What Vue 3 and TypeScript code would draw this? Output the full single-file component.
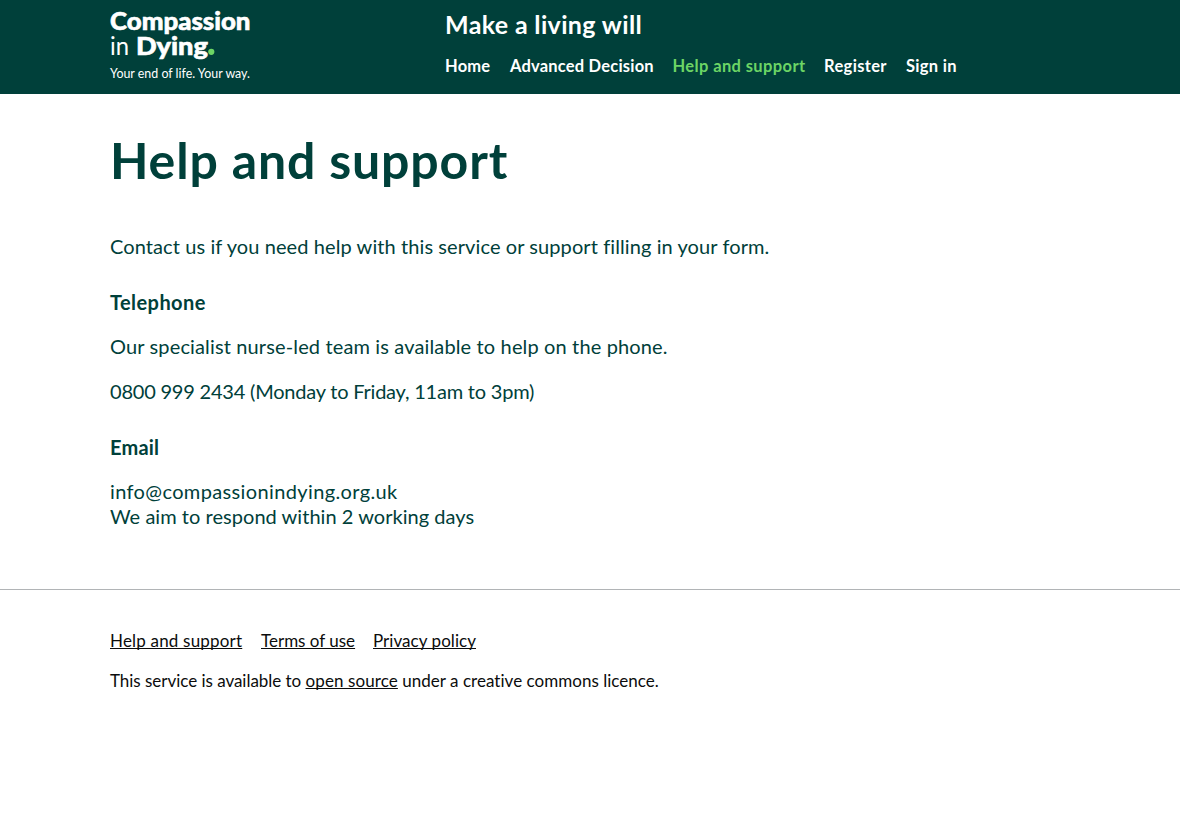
<script setup lang="ts">
interface Link {
  label: string
  kind: string
}

const navigation: Link[] = [
  { label: 'Home', kind: 'home' },
  { label: 'Advanced Decision', kind: 'decision' },
  { label: 'Help and support', kind: 'help active' },
  { label: 'Register', kind: 'register' },
  { label: 'Sign in', kind: 'sign-in' },
]

const footerLinks: Link[] = [
  { label: 'Help and support', kind: 'help' },
  { label: 'Terms of use', kind: 'terms' },
  { label: 'Privacy policy', kind: 'privacy' },
]
</script>

<template>
  <div class="page">
    <header class="header">
      <div class="container header-row">
        <a class="logo" aria-label="Compassion in Dying">
          <svg width="142" height="76" viewBox="0 0 142 76">
            <g fill="#fff">
              <text x="0" y="21.5" class="heavy" textLength="140.5" lengthAdjust="spacingAndGlyphs">Compassion</text>
              <text x="0" y="46.5" class="light" textLength="19" lengthAdjust="spacingAndGlyphs">in</text>
              <text x="26" y="46.5" class="heavy" textLength="72" lengthAdjust="spacingAndGlyphs">Dying</text>
              <text x="0" y="69.5" class="tagline" textLength="140" lengthAdjust="spacingAndGlyphs">Your end of life. Your way.</text>
            </g>
            <circle cx="101.3" cy="43.8" r="3.1" fill="#6cd565" />
          </svg>
        </a>
        <div class="service">
          <div class="service-name"><span>Make a living will</span></div>
          <nav class="nav">
            <a v-for="link in navigation" :key="link.label" :class="link.kind">{{ link.label }}</a>
          </nav>
        </div>
      </div>
    </header>

    <main class="container main">
      <h1>Help and support</h1>
      <p class="intro">Contact us if you need help with this service or support filling in your form.</p>
      <h2 class="telephone">Telephone</h2>
      <p class="team">Our specialist nurse-led team is available to help on the phone.</p>
      <p class="hours">0800 999 2434 (Monday to Friday, 11am to 3pm)</p>
      <h2 class="email">Email</h2>
      <p><span class="address">info@compassionindying.org.uk</span><br /><span class="response">We aim to respond within 2 working days</span></p>
    </main>

    <footer class="footer">
      <div class="container">
        <div class="footer-links">
          <a v-for="link in footerLinks" :key="link.label" :class="link.kind">{{ link.label }}</a>
        </div>
        <p class="licence"><span class="before">This service is available to </span><a class="source">open source</a><span class="after"> under a creative commons licence.</span></p>
      </div>
    </footer>
  </div>
</template>

<style>
body {
  margin: 0;
  background: #fff;
}
</style>

<style scoped>
.page {
  font-family: Lato, "Open Sans", sans-serif;
  color: #00403a;
  font-size: 20px;
  line-height: 25px;
}
.container {
  width: 960px;
  margin: 0 auto;
}
.header {
  height: 94px;
  background: #00403a;
  color: #fff;
}
.header-row {
  display: grid;
  grid-template-columns: 335px 1fr;
}
.logo {
  display: block;
  padding-top: 8px;
}
.logo svg {
  display: block;
  overflow: visible;
}
.heavy {
  font-size: 25px;
  font-weight: 900;
  stroke: #fff;
  stroke-width: 0.6px;
}
.light {
  font-size: 25px;
  font-weight: 400;
}
.tagline {
  font-size: 12.5px;
}
.service-name {
  padding-top: 9px;
  font-size: 25px;
  line-height: 30px;
  font-weight: 700;
  letter-spacing: 0.35px;
}
.nav {
  display: grid;
  grid-template-columns: 65px 162.5px 151.5px 82px auto;
  padding-top: 17px;
  font-size: 16.5px;
  line-height: 20px;
  font-weight: 700;
  letter-spacing: 0.2px;
  white-space: nowrap;
}
.active {
  color: #6cd565;
  letter-spacing: 0.38px;
}
.nav .register {
  letter-spacing: 0.35px;
}
.nav .sign-in {
  letter-spacing: 0.3px;
}
.main {
  padding-top: 36px;
}
h1 {
  margin: 0;
  font-size: 50px;
  line-height: 60px;
  font-weight: 700;
  letter-spacing: 0.85px;
}
p {
  margin: 0 0 20px;
  white-space: nowrap;
}
.intro {
  margin-top: 44px;
  margin-bottom: 31px;
  letter-spacing: 0.09px;
}
h2 {
  margin: 0 0 19px;
  font-size: 20px;
  line-height: 25px;
  font-weight: 700;
}
.telephone {
  letter-spacing: 0.42px;
}
.email {
  letter-spacing: 0.2px;
}
.team {
  letter-spacing: 0.14px;
}
.hours {
  margin-bottom: 31px;
  letter-spacing: -0.21px;
}
.address {
  letter-spacing: 0.37px;
}
.response {
  letter-spacing: 0.04px;
}
.footer {
  margin-top: 60px;
  padding-top: 41px;
  border-top: 1px solid #b1b4b6;
  color: #0b0c0c;
  font-size: 17px;
  line-height: 20px;
}
.footer-links {
  display: grid;
  grid-template-columns: 151px 112px auto;
  justify-content: start;
  margin-bottom: 20px;
  white-space: nowrap;
}
.footer-links a {
  justify-self: start;
}
.footer-links .help {
  letter-spacing: 0.19px;
}
.footer-links .privacy {
  letter-spacing: 0.05px;
}
.footer a {
  text-decoration: underline;
  text-decoration-thickness: 1px;
  text-decoration-skip-ink: none;
  text-underline-offset: 1px;
}
.before {
  letter-spacing: -0.03px;
}
.source {
  letter-spacing: 0.1px;
}
.after {
  letter-spacing: 0.03px;
}
.licence span {
  white-space: pre;
}
</style>
